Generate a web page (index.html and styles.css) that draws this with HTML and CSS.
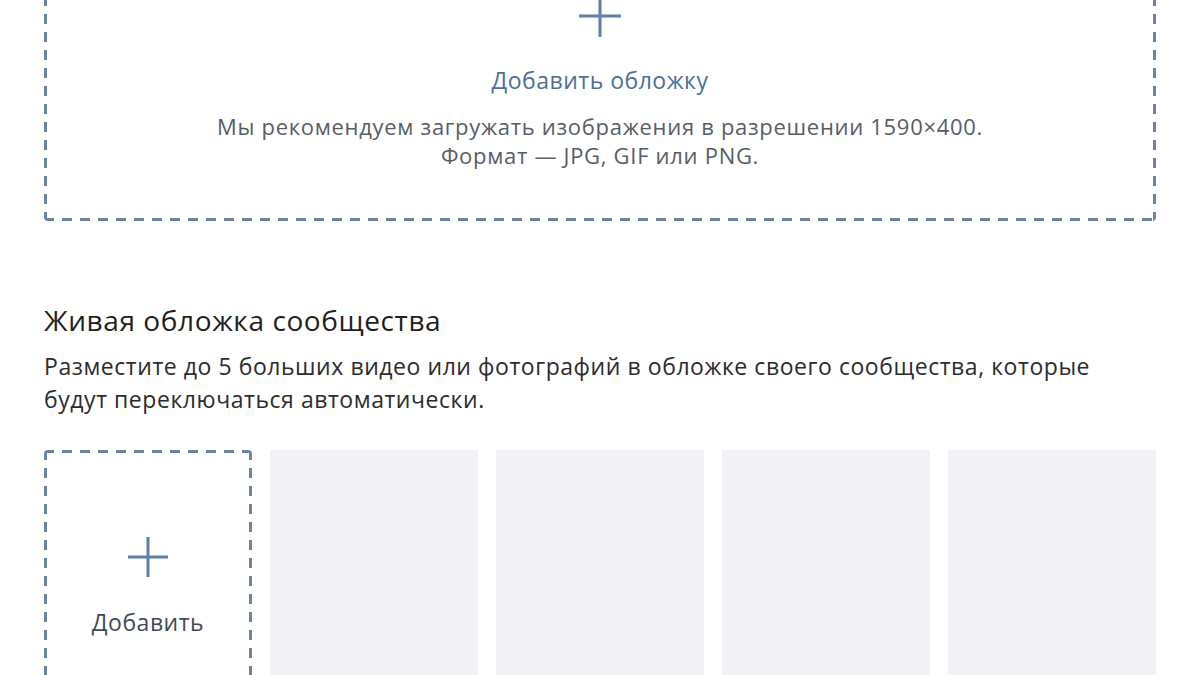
FILE: index.html
```html
<!DOCTYPE html>
<html lang="ru">
<head>
<meta charset="utf-8">
<title>Обложка сообщества</title>
<link rel="stylesheet" href="styles.css">
</head>
<body>
<div class="page">
  <div class="cover-upload dashed">
    <svg class="plus plus-top" viewBox="0 0 42 42" aria-hidden="true"><path d="M21 0V42M0 21H42" stroke="currentColor" stroke-width="3" fill="none"/></svg>
    <div class="cover-title">Добавить обложку</div>
    <div class="cover-desc">Мы рекомендуем загружать изображения в разрешении 1590×400.<br>Формат — JPG, GIF или PNG.</div>
  </div>

  <h2 class="section-title">Живая обложка сообщества</h2>
  <p class="section-text">Разместите до 5 больших видео или фотографий в обложке своего сообщества, которые<br>будут переключаться автоматически.</p>

  <div class="tiles">
    <div class="tile tile-add dashed">
      <svg class="plus plus-small" viewBox="0 0 40 40" aria-hidden="true"><path d="M20 0V40M0 20H40" stroke="currentColor" stroke-width="3" fill="none"/></svg>
      <div class="tile-label">Добавить</div>
    </div>
    <div class="tile tile-empty"></div>
    <div class="tile tile-empty"></div>
    <div class="tile tile-empty"></div>
    <div class="tile tile-empty"></div>
  </div>
</div>
</body>
</html>
```
FILE: styles.css
```css
html, body {
  margin: 0;
  padding: 0;
  background: #ffffff;
  overflow: hidden;
}
body {
  font-family: "Open Sans", Roboto, "Liberation Sans", Arial, sans-serif;
  color: #222;
}
.page {
  padding: 0 44px;
  width: 1112px;
}
.dashed {
  --dc: #6a83a3;
  background:
    repeating-linear-gradient(90deg, var(--dc) 0 10px, transparent 10px 18px) left top / 100% 3px no-repeat,
    repeating-linear-gradient(90deg, var(--dc) 0 10px, transparent 10px 18px) left bottom / 100% 3px no-repeat,
    repeating-linear-gradient(180deg, var(--dc) 0 10px, transparent 10px 18px) left top / 3px 100% no-repeat,
    repeating-linear-gradient(180deg, var(--dc) 0 10px, transparent 10px 18px) right top / 3px 100% no-repeat;
  border-radius: 4px;
}
.cover-upload {
  margin-top: -40px;
  height: 261px;
  box-sizing: border-box;
  padding-top: 35px;
  display: flex;
  flex-direction: column;
  align-items: center;
  text-align: center;
}
.plus {
  display: block;
  color: #5f7ea5;
}
.plus-top {
  width: 42px;
  height: 42px;
}
.cover-title {
  margin-top: 31px;
  font-size: 23px;
  line-height: 24px;
  letter-spacing: 0.5px;
  color: #4d6f97;
}
.cover-desc {
  margin-top: 20px;
  font-size: 22px;
  line-height: 29px;
  letter-spacing: 0.7px;
  color: #575d66;
}
.section-title {
  margin: 84px 0 0;
  font-size: 28px;
  line-height: 30px;
  font-weight: 400;
  letter-spacing: 0.6px;
  color: #1f1f20;
}
.section-text {
  margin: 15px 0 0;
  font-size: 23px;
  line-height: 33px;
  letter-spacing: 0.55px;
  color: #2b2c2e;
}
.tiles {
  margin-top: 34px;
  display: grid;
  grid-template-columns: repeat(5, 1fr);
  gap: 18px;
}
.tile {
  height: 260px;
}
.tile-empty {
  background: #f1f2f6;
}
.tile-add {
  display: flex;
  flex-direction: column;
  align-items: center;
  padding-top: 87px;
  box-sizing: border-box;
}
.plus-small {
  width: 40px;
  height: 40px;
}
.tile-label {
  margin-top: 33px;
  font-size: 23px;
  line-height: 24px;
  letter-spacing: 0.5px;
  color: #3f4a57;
}
```
